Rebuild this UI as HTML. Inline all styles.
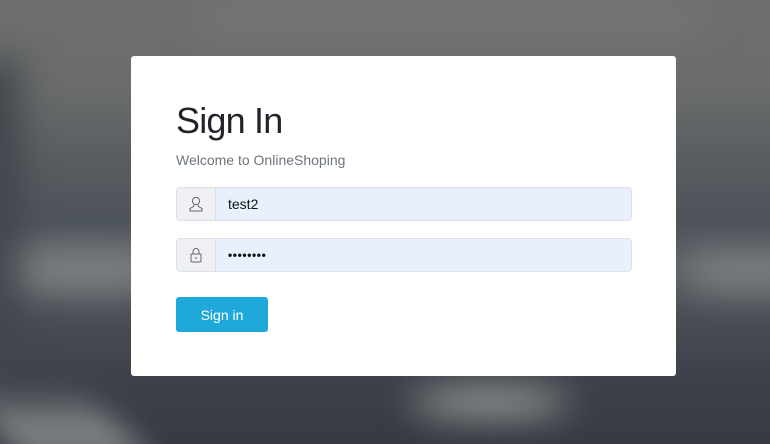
<!DOCTYPE html>
<html><head><style>
html,body{margin:0;width:770px;height:444px;overflow:hidden;font-family:"Liberation Sans",sans-serif;}
body{position:relative;background:
linear-gradient(180deg,#6e706e 0%,#6a6c6b 20%,#5a5e62 35%,#4d535a 50%,#5b6166 60%,#4a4f56 70%,#3d424a 85%,#363a42 100%);}
.b{position:absolute;filter:blur(18px);}
.card{position:absolute;left:131px;top:56px;width:545px;height:320px;background:#fff;border-radius:3px;}
h1{position:absolute;left:45px;top:44px;margin:0;font-size:36px;font-weight:500;color:#212529;letter-spacing:-0.8px;}
.sub{position:absolute;left:45px;top:96px;font-size:14px;color:#6c757d;}
.grp{position:absolute;left:45px;width:454px;height:32px;border:1px solid #dde1e6;border-radius:4px;overflow:hidden;display:flex;}
.ad{width:38px;background:#eef0f3;border-right:1px solid #dde1e6;display:flex;align-items:center;justify-content:center;}
.in{flex:1;background:#e8f0fe;font-size:14px;color:#111;display:flex;align-items:center;padding-left:12px;}
.btn{position:absolute;left:45px;top:241px;width:92px;height:35px;background:#1fa9da;border-radius:3px;color:#fff;font-size:14px;display:flex;align-items:center;justify-content:center;}
</style></head><body>
<div class="b" style="left:-20px;top:250px;width:170px;height:40px;background:#7f8386"></div>
<div class="b" style="left:690px;top:255px;width:120px;height:35px;background:#7f8386"></div>
<div class="b" style="left:-30px;top:60px;width:50px;height:320px;background:#41454c"></div>
<div class="b" style="left:0;top:405px;width:130px;height:60px;background:#7c8083;transform:skewX(40deg)"></div>
<div class="b" style="left:410px;top:390px;width:160px;height:25px;background:#a9ada9;border-radius:50%"></div>
<div class="b" style="left:200px;top:0;width:500px;height:40px;background:#737573"></div>
<div class="card">
<h1>Sign In</h1>
<div class="sub">Welcome to OnlineShoping</div>
<div class="grp" style="top:131px"><div class="ad"><svg width="14" height="16" viewBox="0 0 14 16" fill="none" stroke="#666" stroke-width="1"><circle cx="7" cy="5" r="3.6"/><path d="M5 8.5 L4.5 10.5 L1 12.5 V15 H13 V12.5 L9.5 10.5 L9 8.5"/></svg></div><div class="in">test2</div></div>
<div class="grp" style="top:182px"><div class="ad"><svg width="12" height="16" viewBox="0 0 12 16" fill="none" stroke="#666" stroke-width="1"><path d="M3 7V4.5a3 3 0 0 1 6 0V7"/><rect x="1" y="7" width="10" height="8" rx="1"/><path d="M6 10v2" stroke="#a33"/></svg></div><div class="in" style="font-size:12px;letter-spacing:0.6px;font-weight:bold">••••••••</div></div>
<div class="btn">Sign in</div>
</div>
</body></html>
